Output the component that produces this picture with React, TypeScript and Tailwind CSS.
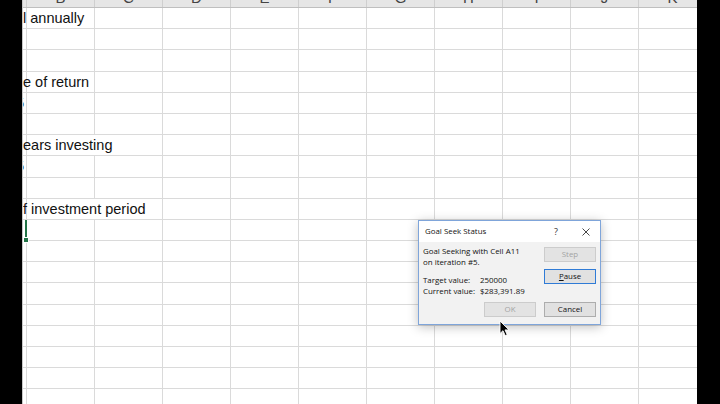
import React from 'react';

const COLS = ['B', 'C', 'D', 'E', 'F', 'G', 'H', 'I', 'J', 'K'];
const ROW_COUNT = 19;

// visible pieces of column A text (the rest is hidden behind the black bar)
const labels: Record<number, string> = {
  0: 'l annually',
  3: 'e of return',
  6: 'ears investing',
  9: 'f investment period',
};
const values: Record<number, string> = { 4: '0.05', 7: '35' };
const overflowIntoC = new Set([6, 9]);
const SELECTED = 10;

function HeaderRow() {
  return (
    <div className="flex h-[8px] shrink-0 bg-[#e6e6e6] border-b border-[#bfbfbf]">
      <div className="w-[4px] shrink-0 border-r border-[#cfcfcf]" />
      {COLS.map((c) => (
        <div
          key={c}
          className="w-[68px] shrink-0 border-r border-[#cfcfcf] flex justify-center overflow-hidden"
        >
          <span className="text-[15px] leading-[12px] -mt-[8px] text-[#444]">{c}</span>
        </div>
      ))}
    </div>
  );
}

function SheetRow({ index }: { index: number }) {
  const label = labels[index];
  const value = values[index];
  const selected = index === SELECTED;
  return (
    <div className="flex h-[21.2px] shrink-0 border-b border-[#dadada]">
      <div
        className={`relative w-[4px] shrink-0 flex items-center ${
          selected ? 'border-r-2 border-[#217346]' : 'border-r border-[#dadada]'
        } ${value ? 'justify-end pr-[2px]' : 'justify-start'}`}
      >
        {label && (
          <span className="relative z-10 shrink-0 whitespace-nowrap text-[14.5px] leading-[20px] text-[#111]">
            {label}
          </span>
        )}
        {value && (
          <span className="shrink-0 whitespace-nowrap text-[14.5px] leading-[20px] text-[#111]">
            {value}
          </span>
        )}
      </div>
      {COLS.map((c, i) => (
        <div
          key={c}
          className={`w-[68px] shrink-0 border-r ${
            i === 0 && overflowIntoC.has(index) ? 'border-transparent' : 'border-[#dadada]'
          }`}
        />
      ))}
    </div>
  );
}

function GoalSeekDialog() {
  return (
    <div
      className="absolute left-[418px] top-[220px] w-[183px] h-[105px] border border-[#7fa5da] bg-[#f2f2f2] shadow-[0_2px_10px_rgba(0,0,0,0.25)] flex flex-col text-[7.9px] leading-[11px] text-[#111]"
      style={{ fontFamily: '"Open Sans", "Noto Sans", sans-serif' }}
    >
      <div className="h-[21px] shrink-0 bg-white flex items-center pl-[6px] pr-[10px]">
        <span className="flex-1">Goal Seek Status</span>
        <span className="w-[10px] text-center text-[9px] text-[#333] mr-[21px]">?</span>
        <svg width="8" height="8" viewBox="0 0 8 8" className="text-[#333]">
          <path d="M0.5 0.5L7.5 7.5M7.5 0.5L0.5 7.5" stroke="currentColor" strokeWidth="0.9" />
        </svg>
      </div>

      <div className="flex justify-between pl-[4px] pr-[4px] pt-[4px]">
        <div className="flex flex-col">
          <span>Goal Seeking with Cell A11</span>
          <span>on iteration #5.</span>
          <div className="mt-[7px] flex">
            <span className="w-[57px]">Target value:</span>
            <span>250000</span>
          </div>
          <div className="flex">
            <span className="w-[57px]">Current value:</span>
            <span>$283,391.89</span>
          </div>
        </div>
        <div className="flex flex-col gap-[7px] pt-[1px]">
          <button className="w-[52px] h-[15px] bg-[#e3e3e3] border border-[#cccccc] text-[#a3a3a3] leading-[13px]">
            Step
          </button>
          <button className="w-[52px] h-[15px] bg-[#e1e1e1] border border-[#2f7bd6] text-[#111] leading-[13px]">
            <span className="underline">P</span>ause
          </button>
        </div>
      </div>

      <div className="flex justify-end gap-[8px] pr-[4px] mt-[5px]">
        <button className="w-[52px] h-[15px] bg-[#e3e3e3] border border-[#cccccc] text-[#a3a3a3] leading-[13px]">
          OK
        </button>
        <button className="w-[52px] h-[15px] bg-[#e1e1e1] border border-[#adadad] text-[#111] leading-[13px]">
          Cancel
        </button>
      </div>
    </div>
  );
}

function Cursor() {
  return (
    <svg
      className="absolute left-[499px] top-[320px]"
      width="11"
      height="17"
      viewBox="0 0 11 17"
    >
      <path
        d="M1 1 L1 13.5 L4 10.7 L6.2 15.6 L8.2 14.7 L6 9.9 L10 9.9 Z"
        fill="#000"
        stroke="#fff"
        strokeWidth="0.9"
        strokeLinejoin="round"
      />
    </svg>
  );
}

export default function App() {
  return (
    <div
      className="relative w-[720px] h-[404px] bg-black flex overflow-hidden"
      style={{ fontFamily: '"Liberation Sans", Arial, sans-serif' }}
    >
      <div className="w-[22px] shrink-0" />
      <div className="w-[675px] shrink-0 bg-white border-l border-[#c8c8c8] flex flex-col overflow-hidden">
        <HeaderRow />
        {Array.from({ length: ROW_COUNT }, (_, i) => (
          <SheetRow key={i} index={i} />
        ))}
      </div>
      <div className="flex-1" />

      {/* fill handle of the selected cell */}
      <div className="absolute left-[24px] top-[238px] w-[4px] h-[4px] bg-[#217346] outline outline-1 outline-white" />

      <GoalSeekDialog />
      <Cursor />
    </div>
  );
}
